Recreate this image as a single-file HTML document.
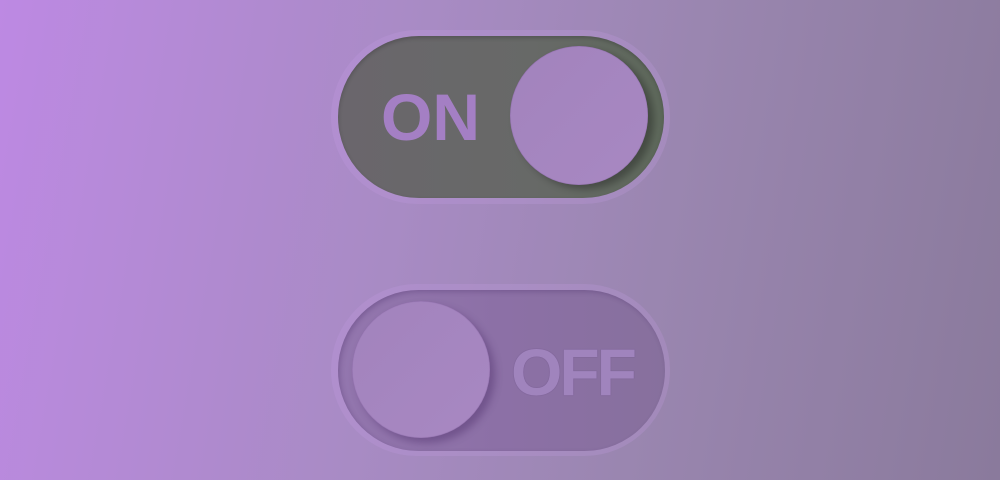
<!DOCTYPE html>
<html><head><style>
html,body{margin:0;padding:0}
body{width:1000px;height:480px;overflow:hidden;position:relative;background:linear-gradient(100deg,#bd89e3 0%,#a88bc4 40%,#9a86b0 65%,#8a7a9c 100%);font-family:"Liberation Sans","DejaVu Sans",sans-serif}
.ring{position:absolute;border-radius:90px;background:rgba(200,160,230,0.22)}
.track{position:absolute;border-radius:81px}
.knob{position:absolute;border-radius:50%;background:linear-gradient(135deg,#a283bd,#a888c2)}
.txt{position:absolute;font-weight:bold;font-size:66px;line-height:1;font-family:"Liberation Sans",sans-serif;white-space:nowrap}
</style></head><body>
<div class="ring" style="left:331px;top:30px;width:339px;height:174px"></div>
<div class="track" style="left:338px;top:36px;width:326px;height:162px;background:linear-gradient(90deg,#6a666c,#676967 60%,#5f6a5c);box-shadow:inset 0 2px 4px rgba(0,0,0,0.2)"></div>
<div class="txt" style="left:381px;top:84px;color:#a47fc4">ON</div>
<div class="knob" style="left:510px;top:46px;width:138px;height:139px;box-shadow:6px 4px 8px rgba(0,0,0,0.3),inset 0 0 1px rgba(80,40,110,0.6)"></div>

<div class="ring" style="left:331px;top:284px;width:339px;height:172px"></div>
<div class="track" style="left:338px;top:290px;width:327px;height:161px;background:linear-gradient(90deg,#9376ae,#8c70a6 50%,#87709d);box-shadow:inset 2px 2px 5px rgba(60,30,90,0.25)"></div>
<div class="txt" style="left:511px;top:339px;color:#a084bd;letter-spacing:-3px;text-shadow:0 0 1px rgba(80,50,110,0.5)">OFF</div>
<div class="knob" style="left:352px;top:301px;width:138px;height:137px;box-shadow:5px 5px 8px rgba(60,30,90,0.35),inset 0 0 1px rgba(80,40,110,0.6)"></div>
</body></html>
